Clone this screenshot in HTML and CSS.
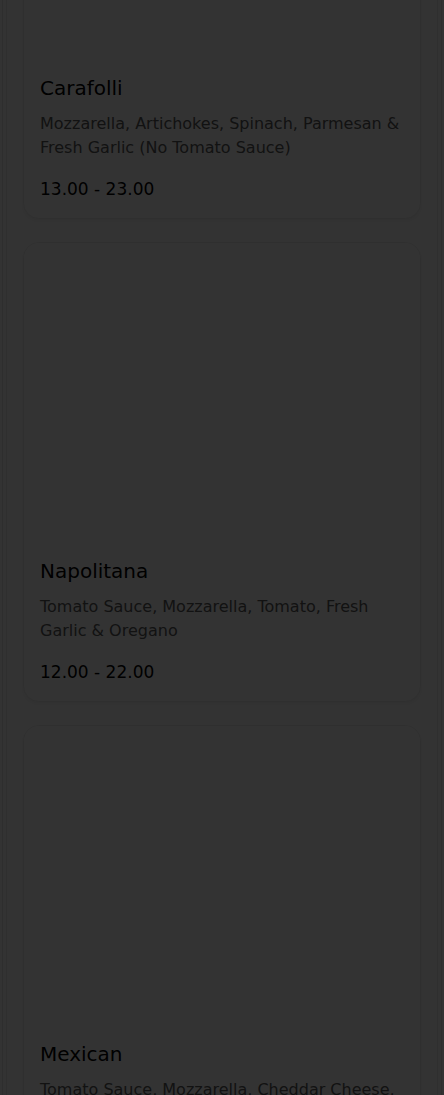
FILE: index.html
```html
<!DOCTYPE html>
<html lang="en">
<head>
<meta charset="utf-8">
<title>Menu</title>
<link rel="stylesheet" href="styles.css">
</head>
<body>
<div class="page">
  <div class="list">
    <article class="card">
      <div class="card-img"></div>
      <div class="card-body">
        <h3 class="card-title">Carafolli</h3>
        <p class="card-desc">Mozzarella, Artichokes, Spinach, Parmesan &amp; Fresh Garlic (No Tomato Sauce)</p>
        <div class="card-price">13.00 - 23.00</div>
      </div>
    </article>
    <article class="card">
      <div class="card-img"></div>
      <div class="card-body">
        <h3 class="card-title">Napolitana</h3>
        <p class="card-desc">Tomato Sauce, Mozzarella, Tomato, Fresh Garlic &amp; Oregano</p>
        <div class="card-price">12.00 - 22.00</div>
      </div>
    </article>
    <article class="card">
      <div class="card-img"></div>
      <div class="card-body">
        <h3 class="card-title">Mexican</h3>
        <p class="card-desc">Tomato Sauce, Mozzarella, Cheddar Cheese, Jalapeños, Onions &amp; Peppers</p>
        <div class="card-price">13.00 - 23.00</div>
      </div>
    </article>
  </div>
</div>
<div class="overlay"></div>
</body>
</html>
```

FILE: styles.css
```css
html, body {
  margin: 0;
  padding: 0;
  background: #ffffff;
  font-family: "DejaVu Sans", "Liberation Sans", sans-serif;
  color: #000;
  overflow: hidden;
  height: 1095px;
}
.page {
  margin: 0 2px;
  border-left: 1px solid #e6e6e6;
  border-right: 1px solid #e6e6e6;
  padding: 0 3px;
  min-height: 1095px;
}
.list {
  display: flex;
  flex-direction: column;
  gap: 23px;
  padding: 0 16px;
  margin-top: -241px;
  border-left: 1px solid #ececec;
  border-right: 1px solid #ececec;
}
.card {
  background: #fff;
  border: 1px solid #ececec;
  border-radius: 16px;
  box-shadow: 0 2px 4px rgba(0,0,0,0.06);
  overflow: hidden;
}
.card-img {
  height: 300px;
  background: #fff;
}
.card-body {
  padding: 16px 16px 17px;
}
.card-title {
  margin: 0;
  font-size: 20px;
  line-height: 24px;
  font-weight: 500;
  color: #000;
}
.card-desc {
  margin: 12px 0 0;
  font-size: 16px;
  line-height: 24px;
  font-weight: 400;
  color: #5a5a5a;
}
.card-price {
  margin-top: 17px;
  font-size: 17px;
  line-height: 24px;
  font-weight: 500;
  color: #000;
}
.overlay {
  position: fixed;
  inset: 0;
  background: rgba(0, 0, 0, 0.8);
}
```
